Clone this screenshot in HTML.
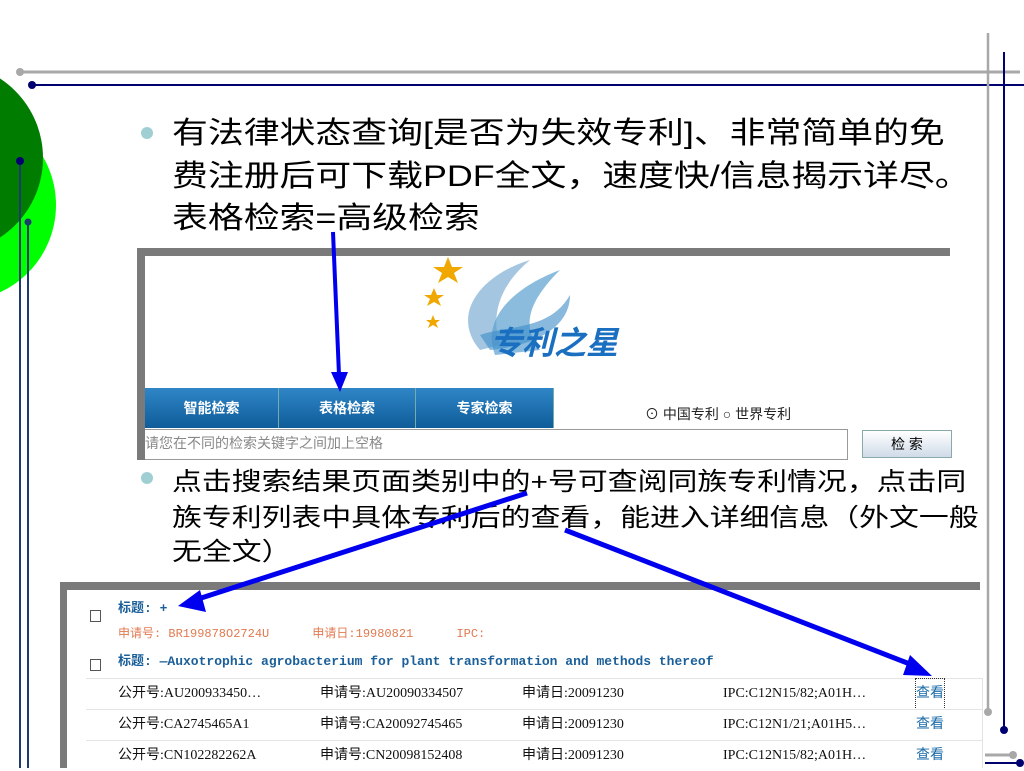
<!DOCTYPE html>
<html><head><meta charset="utf-8"><style>
body{margin:0;width:1024px;height:768px;overflow:hidden;background:#fff;position:relative;font-family:"Liberation Sans","Noto Sans CJK SC",sans-serif}
.a{position:absolute}
.ln{position:absolute;white-space:nowrap;transform-origin:0 0;color:#000}
.l1{font-size:30px;left:172px;transform:scaleX(1.195)}
.l2{font-size:25px;left:172px;transform:scaleX(1.195)}
.tab{position:absolute;top:388px;height:40px;background:linear-gradient(#2f86c6,#0f5c9a);color:#fff;font-size:14px;font-weight:bold;text-align:center;line-height:40px;border-right:1px solid #7aa}
.mono{font-family:"Liberation Mono","Noto Sans CJK SC",monospace}
.row{position:absolute;left:86px;width:896px;height:30px;border-top:1px solid #e4e4e4;font-size:14px;line-height:30px;color:#111;font-family:"Liberation Serif","Noto Sans CJK SC",serif}
.row span{position:absolute}
</style></head><body>
<svg class="a" style="left:0;top:0" width="1024" height="768">
<circle cx="-40" cy="205" r="96" fill="#00ff00"/>
<circle cx="-52" cy="158" r="95" fill="#007d00"/>
<line x1="20" y1="72" x2="1020" y2="72" stroke="#a8a8a8" stroke-width="3"/>
<circle cx="20" cy="72" r="4" fill="#a8a8a8"/>
<line x1="32" y1="85" x2="1024" y2="85" stroke="#000070" stroke-width="2"/>
<circle cx="32" cy="85" r="4" fill="#000070"/>
<line x1="20" y1="161" x2="20" y2="768" stroke="#1f3a6e" stroke-width="2"/>
<circle cx="20" cy="161" r="4" fill="#000070"/>
<line x1="28" y1="222" x2="28" y2="768" stroke="#1f3a6e" stroke-width="2"/>
<circle cx="28" cy="222" r="3.5" fill="#1f3a6e"/>
<line x1="988" y1="33" x2="988" y2="712" stroke="#a8a8a8" stroke-width="2.5"/>
<circle cx="988" cy="712" r="4" fill="#a8a8a8"/>
<line x1="1004" y1="52" x2="1004" y2="730" stroke="#000070" stroke-width="2"/>
<circle cx="1004" cy="730" r="4" fill="#000070"/>
<line x1="985" y1="755" x2="1013" y2="755" stroke="#a8a8a8" stroke-width="3"/>
<circle cx="1013" cy="755" r="4" fill="#a8a8a8"/>
<line x1="985" y1="763" x2="1020" y2="763" stroke="#000070" stroke-width="2"/>
<circle cx="1020" cy="763" r="4" fill="#000070"/>
<circle cx="147" cy="133" r="6" fill="#9fcfd3"/>
<circle cx="147" cy="478" r="6" fill="#9fcfd3"/>
</svg>
<div class="ln l1" style="top:108px">有法律状态查询[是否为失效专利]、非常简单的免</div>
<div class="ln l1" style="top:151px">费注册后可下载PDF全文，速度快/信息揭示详尽。</div>
<div class="ln l1" style="top:193px">表格检索=高级检索</div>

<!-- panel 1 -->
<div class="a" style="left:137px;top:248px;width:813px;height:8px;background:#7a7a7a"></div>
<div class="a" style="left:137px;top:248px;width:8px;height:212px;background:#7a7a7a"></div>
<svg class="a" style="left:420px;top:255px" width="200" height="110">
<path d="M60 95 C30 60 60 20 110 5 C80 30 70 60 80 90Z" fill="#8fb8d8" opacity=".8"/>
<path d="M75 100 C60 60 100 30 140 15 C110 45 100 70 120 95Z" fill="#5aa0d0" opacity=".7"/>
<path d="M60 80 C90 70 130 75 150 40 C150 70 120 90 70 95Z" fill="#3a8cc8" opacity=".6"/>
<polygon points="28,2 32,12 43,12 34,18 38,28 28,22 18,28 22,18 13,12 24,12" fill="#f0a800"/>
<polygon points="14,33 17,40 24,40 18,44 21,51 14,47 7,51 10,44 4,40 11,40" fill="#f0a800"/>
<polygon points="13,60 15,65 20,65 16,68 18,73 13,70 8,73 10,68 6,65 11,65" fill="#f0a800"/>
</svg>
<div class="a" style="left:490px;top:318px;font-size:32px;font-weight:bold;color:#1a6fc0;font-style:italic">专利之星</div>
<div class="tab" style="left:145px;width:133px">智能检索</div>
<div class="tab" style="left:279px;width:136px">表格检索</div>
<div class="tab" style="left:416px;width:137px">专家检索</div>
<div class="a" style="left:645px;top:404px;font-size:14px;color:#222">⊙ 中国专利 ○ 世界专利</div>
<div class="a" style="left:145px;top:429px;width:702px;height:29px;border:1px solid #999;border-left:none;font-size:14px;color:#888;line-height:26px">请您在不同的检索关键字之间加上空格</div>
<div class="a" style="left:862px;top:430px;width:88px;height:26px;border:1px solid #8aa;background:linear-gradient(#fff,#cfdbe8);font-size:14px;text-align:center;line-height:26px">检 索</div>

<div class="ln l2" style="top:462px">点击搜索结果页面类别中的+号可查阅同族专利情况，点击同</div>
<div class="ln l2" style="top:498px">族专利列表中具体专利后的查看，能进入详细信息（外文一般</div>
<div class="ln l2" style="top:532px">无全文）</div>

<!-- panel 2 -->
<div class="a" style="left:60px;top:582px;width:920px;height:8px;background:#7a7a7a"></div>
<div class="a" style="left:60px;top:582px;width:7px;height:186px;background:#7a7a7a"></div>
<div class="a" style="left:90px;top:610px;width:9px;height:10px;border:1px solid #555"></div>
<div class="a" style="left:90px;top:659px;width:9px;height:10px;border:1px solid #555"></div>
<div class="a mono" style="left:118px;top:597px;font-size:13px;color:#1a5f99;font-weight:bold">标题: +</div>
<div class="a mono" style="left:118px;top:624px;font-size:12px;color:#e07a50">申请号: BR199878O2724U&nbsp;&nbsp;&nbsp;&nbsp;&nbsp; 申请日:19980821&nbsp;&nbsp;&nbsp;&nbsp;&nbsp; IPC:</div>
<div class="a mono" style="left:118px;top:650px;font-size:13px;color:#1a5f99;font-weight:bold">标题: —Auxotrophic agrobacterium for plant transformation and methods thereof</div>
<div class="row" style="top:678px"><span style="left:32px">公开号:AU200933450…</span><span style="left:234px">申请号:AU20090334507</span><span style="left:436px">申请日:20091230</span><span style="left:637px">IPC:C12N15/82;A01H…</span><span style="left:830px;color:#1a6aa8;outline:1px dotted #333">查看</span></div>
<div class="row" style="top:709px"><span style="left:32px">公开号:CA2745465A1</span><span style="left:234px">申请号:CA20092745465</span><span style="left:436px">申请日:20091230</span><span style="left:637px">IPC:C12N1/21;A01H5…</span><span style="left:830px;color:#1a6aa8">查看</span></div>
<div class="row" style="top:740px"><span style="left:32px">公开号:CN102282262A</span><span style="left:234px">申请号:CN20098152408</span><span style="left:436px">申请日:20091230</span><span style="left:637px">IPC:C12N15/82;A01H…</span><span style="left:830px;color:#1a6aa8">查看</span></div>
<div class="a" style="left:982px;top:678px;width:1px;height:90px;background:#e4e4e4"></div>

<svg class="a" style="left:0;top:0" width="1024" height="768">
<line x1="333" y1="232" x2="339" y2="375" stroke="#0000ee" stroke-width="4"/>
<polygon points="331,372 348,372 340,392" fill="#0000ee"/>
<line x1="527" y1="493" x2="195" y2="600" stroke="#0000ee" stroke-width="5"/>
<polygon points="200,590 206,612 178,606" fill="#0000ee"/>
<line x1="565" y1="530" x2="915" y2="666" stroke="#0000ee" stroke-width="5"/>
<polygon points="910,655 903,675 932,676" fill="#0000ee"/>
</svg>
</body></html>
